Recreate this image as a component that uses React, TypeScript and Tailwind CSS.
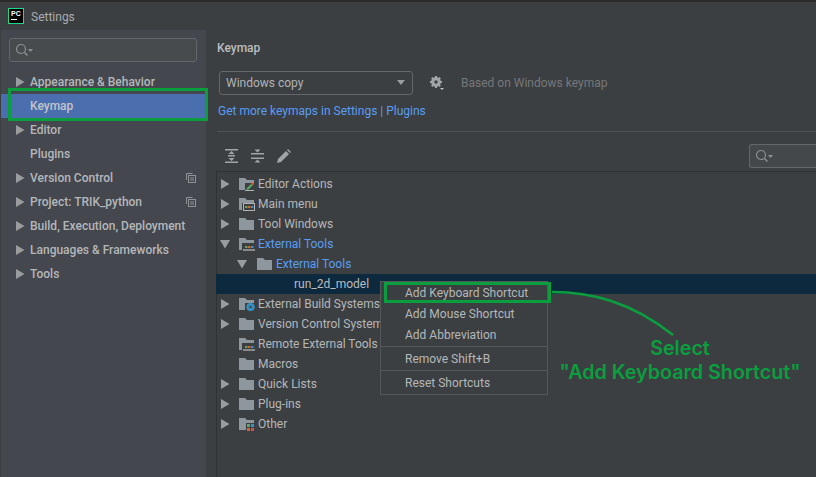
import React from "react";

const uiFont = "font-['Roboto','Noto_Sans',sans-serif]";

function Arrow({ open = false, className = "" }: { open?: boolean; className?: string }) {
  return (
    <svg width="10" height="10" viewBox="0 0 10 10" className={className}>
      {open ? <path d="M0 1h10L5 9.500z" fill="#9a9da0" /> : <path d="M1 0v10L9.500 5z" fill="#9a9da0" />}
    </svg>
  );
}

function SearchIcon() {
  return (
    <svg width="20" height="14" viewBox="0 0 20 14" fill="none">
      <circle cx="6" cy="6" r="4.5" stroke="#8d9092" strokeWidth="1.2" />
      <path d="M9.500 9.500l3 3" stroke="#8d9092" strokeWidth="1.500" />
      <path d="M13 6h5l-2.500 3z" fill="#8d9092" />
    </svg>
  );
}

function CopyIcon() {
  return (
    <svg width="10" height="10" viewBox="0 0 10 10" fill="none" stroke="#8f9296" strokeWidth="1" className="ml-auto mr-[10px]">
      <path d="M.5 7V.5h6" />
      <rect x="2.500" y="2.500" width="7" height="7" />
      <path d="M4 5h4M4 7h4" />
    </svg>
  );
}

type Badge = "pencil" | "menu" | "tools" | "gear" | "grid";

function Folder({ badge }: { badge?: Badge }) {
  return (
    <svg width="16" height="14" viewBox="0 0 16 14" className="shrink-0">
      <path d="M0 1h6l2 2h7v10H0z" fill="#8e979e" />
      {badge === "pencil" && (
        <g>
          <rect x="6" y="6" width="10" height="8" fill="#3c3f41" />
          <path d="M7 12l5-5 2 1-5 5z" fill="#59a869" />
          <path d="M12 7l2-2 1 2-1 1z" fill="#d9622b" />
          <path d="M6 13.500h9" stroke="#afb1b3" />
        </g>
      )}
      {(badge === "menu" || badge === "tools") && (
        <g>
          <rect x="3" y="6" width="13" height="8" fill="#3c3f41" />
          {badge === "menu" && <rect x="4.500" y="6.500" width="11" height="7" fill="none" stroke="#afb1b3" />}
          <rect x="6" y="9" width="2.500" height="2" fill="#59a869" />
          <rect x="9" y="9" width="2.500" height="2" fill="#d9622b" />
          <rect x="12" y="9" width="2.500" height="2" fill="#3592c4" />
          {badge === "tools" && <path d="M4 13h12" stroke="#d4d6d8" />}
        </g>
      )}
      {badge === "gear" && (
        <g>
          <rect x="6" y="6" width="10" height="8" fill="#3c3f41" />
          <circle cx="11.500" cy="10" r="3" fill="none" stroke="#3592c4" strokeWidth="2" />
          <path d="M11.500 5.500v9M7 10h9M8.500 7l6 6M14.500 7l-6 6" stroke="#3592c4" strokeWidth="1" />
          <circle cx="11.500" cy="10" r="1" fill="#3c3f41" />
        </g>
      )}
      {badge === "grid" && (
        <g>
          <rect x="7" y="6" width="9" height="8" fill="#3c3f41" />
          <rect x="8" y="7" width="3" height="3" fill="#59a869" />
          <rect x="12" y="7" width="3" height="3" fill="#3592c4" />
          <rect x="8" y="11" width="3" height="3" fill="#d9622b" />
          <rect x="12" y="11" width="3" height="3" fill="#c75450" />
        </g>
      )}
    </svg>
  );
}

const sideItems = [
  { name: "Appearance & Behavior", arrow: true },
  { name: "Keymap", selected: true },
  { name: "Editor", arrow: true },
  { name: "Plugins" },
  { name: "Version Control", arrow: true, copy: true },
  { name: "Project: TRIK_python", arrow: true, copy: true },
  { name: "Build, Execution, Deployment", arrow: true },
  { name: "Languages & Frameworks", arrow: true },
  { name: "Tools", arrow: true },
];

const treeItems: { name: string; arrow?: "open" | "closed"; badge?: Badge; indent?: boolean; blue?: boolean }[] = [
  { name: "Editor Actions", arrow: "closed", badge: "pencil" },
  { name: "Main menu", arrow: "closed", badge: "menu" },
  { name: "Tool Windows", arrow: "closed" },
  { name: "External Tools", arrow: "open", badge: "tools", blue: true },
  { name: "External Tools", arrow: "open", indent: true, blue: true },
];

const treeItemsAfter: { name: string; arrow?: "open" | "closed"; badge?: Badge }[] = [
  { name: "External Build Systems", arrow: "closed", badge: "gear" },
  { name: "Version Control Systems", arrow: "closed" },
  { name: "Remote External Tools", badge: "tools" },
  { name: "Macros" },
  { name: "Quick Lists", arrow: "closed" },
  { name: "Plug-ins", arrow: "closed" },
  { name: "Other", arrow: "closed", badge: "grid" },
];

export default function App() {
  return (
    <div className={`relative w-[816px] h-[477px] overflow-hidden bg-[#3c3f41] text-[12px] text-[#b4b7ba] ${uiFont}`}>
      <div className="h-[2px] bg-[#2b2b2b]" />

      {/* title bar */}
      <div className="h-[28px] flex items-center pl-[8px] gap-[7px] bg-[#3c3f41]">
        <div className="w-[16px] h-[16px] bg-black border border-[#21d789] flex flex-col px-[2px] pt-[1px]">
          <span className="text-[7px] leading-[7px] font-bold text-white font-['Liberation_Sans',sans-serif]">PC</span>
          <span className="mt-[2px] w-[6px] h-[1px] bg-white" />
        </div>
        <span className="text-[12px] text-[#a9acaf] mt-[1px]">Settings</span>
      </div>

      <div className="flex h-[447px]">
        {/* sidebar */}
        <div className="w-[205px] ml-[1px] bg-[#44474e] shrink-0">
          <div className="pt-[8px] pl-[8px] pr-[8px]">
            <div className="h-[24px] w-[188px] rounded-[3px] border border-[#63666a] bg-[#484b4d] flex items-center pl-[5px]">
              <SearchIcon />
            </div>
          </div>
          <div className="mt-[8px]">
            {sideItems.map((item) => (
              <div
                key={item.name}
                className={`h-[24px] flex items-center font-medium text-[12px] ${item.selected ? "bg-[#4b6eaf] text-[#c2c5c8]" : ""}`}
              >
                <div className="w-[15px] ml-[15px] -mr-[1px] shrink-0">{item.arrow && <Arrow className="-ml-[1px]" />}</div>
                <span className="whitespace-nowrap">{item.name}</span>
                {item.copy && <CopyIcon />}
              </div>
            ))}
          </div>
        </div>

        {/* main panel */}
        <div className="flex-1 min-w-0 bg-[#3c3f41] pl-[11px]">
          <div className="pt-[9px] h-[40px] font-medium text-[12px] text-[#babdc0]">Keymap</div>
          <div className="flex items-center h-[24px] pl-[2px] mt-[1px]">
            <div className="w-[194px] h-[24px] rounded-[3px] border border-[#646769] flex items-center justify-between pl-[6px] pr-[6px] text-[#b0b3b6]">
              <span>Windows copy</span>
              <svg width="10" height="6" viewBox="0 0 10 6"><path d="M1 0h8L5 5z" fill="#9a9da0" /></svg>
            </div>
            <svg width="16" height="16" viewBox="0 0 16 16" className="ml-[16px]">
              <circle cx="7" cy="7" r="3.600" fill="none" stroke="#a2a5a7" strokeWidth="2.600" />
              <path d="M7 1v12M1 7h12M2.800 2.800l8.400 8.400M11.200 2.800l-8.400 8.400" stroke="#a2a5a7" strokeWidth="2" />
              <circle cx="7" cy="7" r="1.700" fill="#3c3f41" />
              <path d="M11 13h4l-2 2z" fill="#c2c5c8" />
            </svg>
            <span className="ml-[16px] text-[#75787b]">Based on Windows keymap</span>
          </div>
          <div className="mt-[6px] ml-[1px] h-[20px] flex items-center text-[#589df6]">Get more keymaps in Settings | Plugins</div>
          <div className="mt-[10px] h-[1px] bg-[#515456]" />

          {/* toolbar */}
          <div className="h-[39px] pt-[8px] flex items-center pl-[8px] gap-[13px]">
            <svg width="13" height="14" viewBox="0 0 13 14" fill="#a2a5a7">
              <rect x="0" y="0" width="13" height="1.500" />
              <rect x="0" y="12.500" width="13" height="1.500" />
              <rect x="3" y="6" width="7" height="1.500" />
              <path d="M6.500 2l3 3h-6zM6.500 12l-3-3h6z" />
            </svg>
            <svg width="13" height="14" viewBox="0 0 13 14" fill="#a2a5a7">
              <rect x="0" y="4" width="13" height="1.500" />
              <rect x="0" y="8.500" width="13" height="1.500" />
              <path d="M6.500 3.500l-3-3h6zM6.500 10.500l3 3h-6z" />
            </svg>
            <svg width="14" height="14" viewBox="0 0 14 14" fill="#a2a5a7">
              <path d="M0 14l1-4 8-8 3 3-8 8z" />
              <path d="M10 1l1-1 3 3-1 1z" />
            </svg>
            <div className="ml-auto w-[67px] h-[24px] rounded-l-[3px] border border-r-0 border-[#646769] bg-[#45484a] flex items-center pl-[5px]">
              <SearchIcon />
            </div>
          </div>

          {/* keymap tree */}
          <div className="border-t border-[#2f3133] border-l pt-[2px] h-[310px] -ml-[1px]">
            {treeItems.map((item, i) => (
              <div key={i} className="h-[20px] flex items-center">
                <div className={`shrink-0 flex justify-start ${item.indent ? "w-[40px] pl-[20px]" : "w-[22px] pl-[3px]"}`}>
                  {item.arrow && <Arrow open={item.arrow === "open"} />}
                </div>
                <Folder badge={item.badge} />
                <span className={`ml-[3px] ${item.blue ? "text-[#589df6]" : ""}`}>{item.name}</span>
              </div>
            ))}
            <div className="h-[20px] -ml-[1px] -mr-[1px] bg-[#0d293e] flex items-center pl-[78px] text-[#b8bbbe]">run_2d_model</div>
            {treeItemsAfter.map((item) => (
              <div key={item.name} className="h-[20px] flex items-center">
                <div className="w-[22px] pl-[3px] shrink-0">{item.arrow && <Arrow />}</div>
                <Folder badge={item.badge} />
                <span className="ml-[3px] whitespace-nowrap">{item.name}</span>
              </div>
            ))}
          </div>
        </div>
      </div>

      {/* context menu */}
      <div className="absolute left-[380px] top-[281px] w-[168px] h-[114px] bg-[#3c3f41] border border-[#55585a] flex flex-col text-[12px]">
        <div className="pl-[24px] h-[63px] flex flex-col justify-start pt-[1px]">
          <div className="h-[21px] flex items-center">Add Keyboard Shortcut</div>
          <div className="h-[21px] flex items-center">Add Mouse Shortcut</div>
          <div className="h-[21px] flex items-center">Add Abbreviation</div>
        </div>
        <div className="h-[1px] mt-[1px] bg-[#55585a]" />
        <div className="pl-[24px] h-[23px] flex items-center">Remove Shift+B</div>
        <div className="h-[1px] bg-[#55585a]" />
        <div className="pl-[24px] h-[23px] flex items-center">Reset Shortcuts</div>
      </div>

      {/* green annotations */}
      <div className="absolute left-[8px] top-[88px] w-[200px] h-[33px] border-[3px] border-[#0a9e3f]" />
      <div className="absolute left-[384px] top-[282px] w-[167px] h-[21px] border-[3px] border-[#0a9e3f]" />
      <svg width="130" height="60" viewBox="0 0 130 60" fill="none" className="absolute left-[550px] top-[285px]">
        <path d="M2 7C40 7 80 16 123 50" stroke="#0a9e3f" strokeWidth="2.500" />
      </svg>
      <div className="absolute left-[530px] top-[336px] w-[300px] text-center text-[19.700px] leading-[24px] font-semibold text-[#0a9e3f] font-['Inter',sans-serif]">
        <div>Select</div>
        <div className="whitespace-nowrap">"Add Keyboard Shortcut"</div>
      </div>
    </div>
  );
}
